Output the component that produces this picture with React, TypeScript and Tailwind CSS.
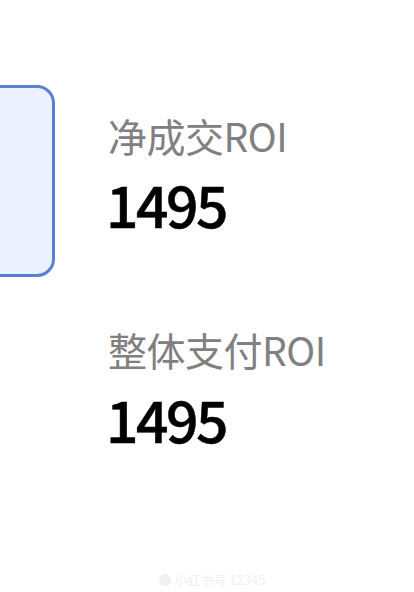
export default function App() {
  return (
    <div className="w-[414px] h-[592px] bg-white overflow-hidden flex flex-col">
      <div className="flex flex-1">
        <div className="pt-[85px]">
          <div className="w-[95px] h-[192px] -ml-[40px] rounded-[18px] border-[3px] border-[#5a7fd5] bg-[#ebf2fd]" />
        </div>
        <div className="ml-[53px] pt-[116px] flex flex-col font-['Noto_Sans_CJK_SC',sans-serif]">
          <div className="text-[39px] leading-none text-[#808080] tracking-[-0.5px]">净成交ROI</div>
          <div className="mt-[20px] ml-[-2px] text-[57px] leading-none font-medium text-black tracking-[-2.5px] [-webkit-text-stroke:0.5px_#000]">1495</div>
          <div className="mt-[98px] text-[39px] leading-none text-[#808080] tracking-[-0.5px]">整体支付ROI</div>
          <div className="mt-[21px] ml-[-2px] text-[57px] leading-none font-medium text-black tracking-[-2.5px] [-webkit-text-stroke:0.5px_#000]">1495</div>
        </div>
      </div>
      <div className="h-[22px] flex justify-center items-start pl-[10px]">
        <span className="text-[13px] text-[#f0f0f0] font-['Noto_Sans_CJK_SC',sans-serif]">● 小红书号 12345</span>
      </div>
    </div>
  );
}
